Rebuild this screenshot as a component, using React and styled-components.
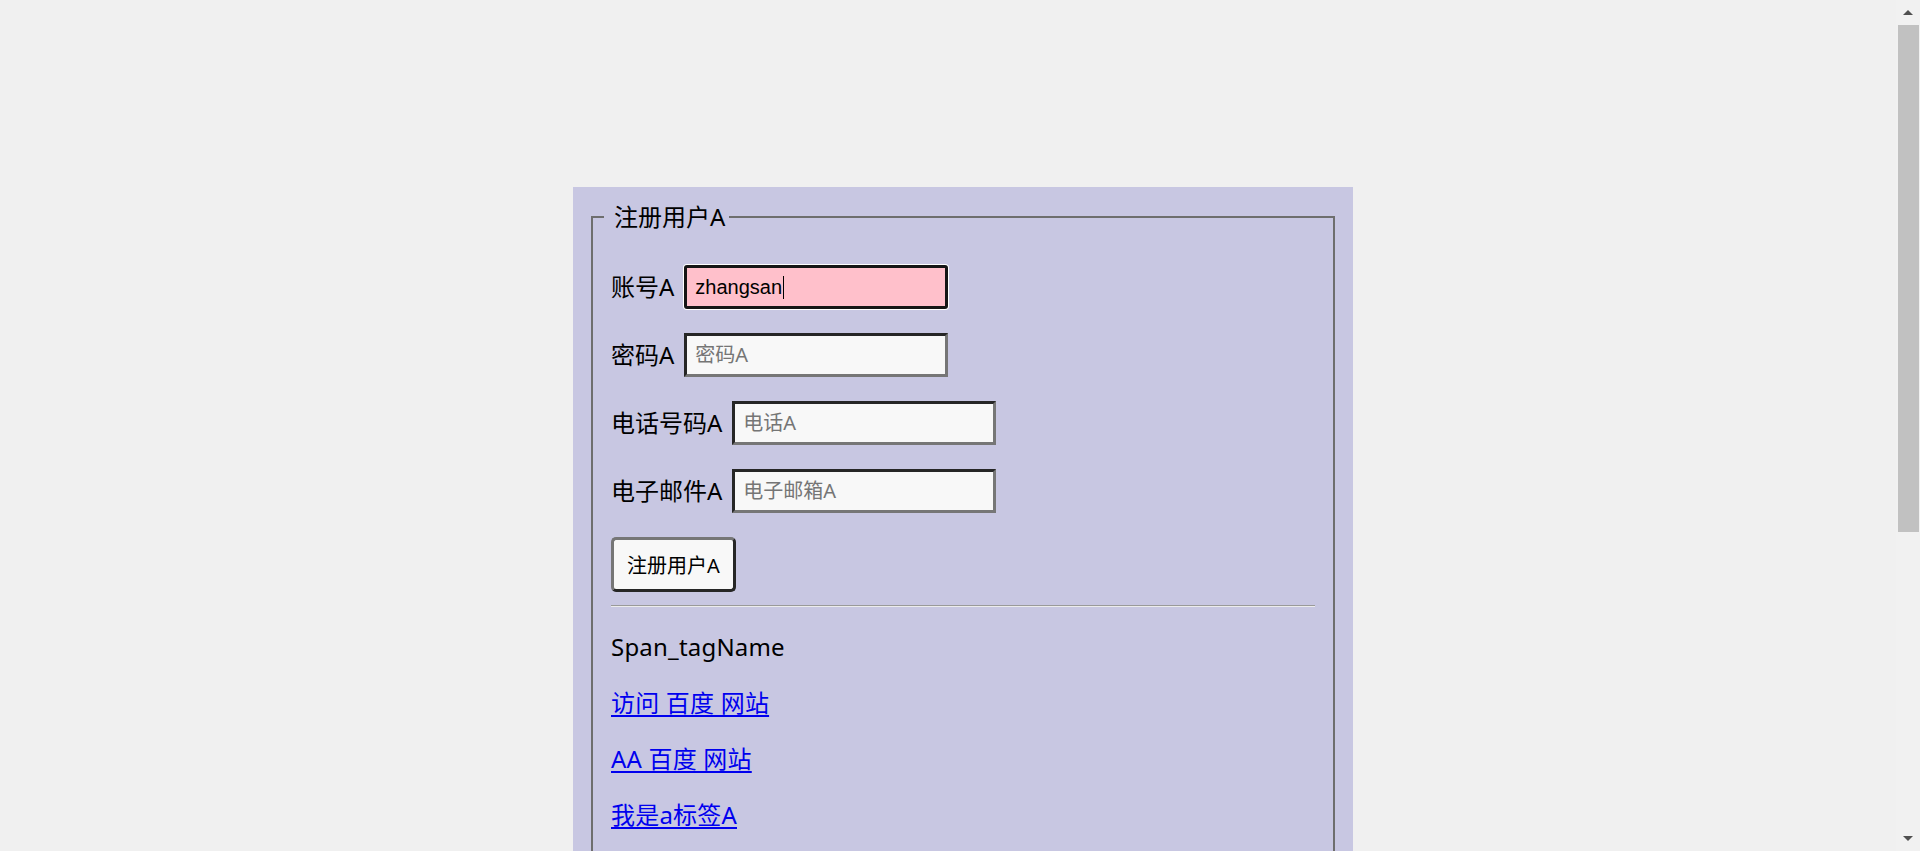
import React from "react";
import styled, { createGlobalStyle } from "styled-components";

const GlobalStyle = createGlobalStyle`
  html, body {
    margin: 0;
    padding: 0;
    background: #f0f0f0;
  }
  body {
    font-family: "Noto Sans", "Noto Sans CJK SC", sans-serif;
    color: #000;
  }
`;

const Page = styled.div`
  padding: 187px 0 20px 573px;
`;

const Panel = styled.div`
  box-sizing: border-box;
  width: 780px;
  min-height: 1165px;
  background: #c8c7e2;
  padding: 14px 16px 16px;
  display: flex;
  flex-direction: column;
`;

const FieldSet = styled.fieldset`
  flex: 1;
  margin: 0 2px;
  border: 2px solid #6e6e6e;
  padding: 32px 18px 20px;
  min-width: 0;
`;

const Legend = styled.legend`
  font-size: 24px;
  line-height: 32px;
  margin-left: -7px;
  padding: 0 4px 0 10px;
`;

const Form = styled.div`
  display: flex;
  flex-direction: column;
  gap: 24px;
`;

const Row = styled.div`
  display: flex;
  align-items: center;
  gap: 10px;
  height: 44px;
`;

const Label = styled.label`
  font-size: 24px;
  line-height: 32px;
  white-space: nowrap;
`;

const Input = styled.input`
  box-sizing: border-box;
  width: 264px;
  height: 44px;
  padding: 0 8px;
  margin: 0;
  font-family: "Liberation Sans", "Noto Sans CJK SC", sans-serif;
  font-size: 20px;
  color: #000;
  background: ${(p) => (p.$active ? "#ffc0cb" : "#f8f8f8")};
  border: 3px solid;
  border-color: ${(p) =>
    p.$active ? "#151515" : "#262626 #767676 #767676 #262626"};
  border-radius: ${(p) => (p.$active ? "3px" : "0")};
  box-shadow: ${(p) => (p.$active ? "0 0 0 1px #ffffff" : "none")};
  outline: none;
  &::placeholder {
    color: #757575;
    font-family: "Noto Sans", "Noto Sans CJK SC", sans-serif;
  }
`;

const InputWrap = styled.span`
  position: relative;
  display: inline-flex;
`;

const Caret = styled.span`
  position: absolute;
  top: 11px;
  left: ${(p) => p.$left}px;
  width: 1px;
  height: 23px;
  background: #000;
`;

const Button = styled.button`
  align-self: flex-start;
  box-sizing: border-box;
  height: 55px;
  padding: 0 13px;
  margin: 0;
  font-family: "Noto Sans", "Noto Sans CJK SC", sans-serif;
  font-size: 20px;
  color: #000;
  background: #f8f8f8;
  border: 3px solid;
  border-color: #767676 #262626 #262626 #767676;
  border-radius: 5px;
`;

const Rule = styled.hr`
  margin: -11px 0 0;
  border: 0;
  border-top: 1px solid #9a9a9a;
  border-bottom: 1px solid #ececec;
  height: 0;
`;

const Text = styled.p`
  margin: 0;
  font-size: 24px;
  line-height: 32px;
  letter-spacing: 0.2px;
`;

const Link = styled.a`
  color: #0000ee;
  text-decoration: underline;
  text-underline-offset: 3px;
`;

/* drawing of the browser's scrollbar, which lies over the page's right edge */
const ScrollTrack = styled.div`
  position: fixed;
  top: 0;
  right: 0;
  width: 24px;
  height: 100vh;
  background: #f1f1f1;
`;

const ScrollThumb = styled.div`
  position: absolute;
  top: 25px;
  left: 2px;
  width: 21px;
  height: 507px;
  background: #c1c1c1;
`;

const Arrow = styled.div`
  position: absolute;
  left: 7px;
  width: 0;
  height: 0;
  border-left: 5px solid transparent;
  border-right: 5px solid transparent;
  ${(p) =>
    p.$down
      ? "bottom: 10px; border-top: 5px solid #505050;"
      : "top: 10px; border-bottom: 5px solid #505050;"}
`;

const fields = [
  { label: "账号A", placeholder: "账号A", value: "zhangsan", active: true },
  { label: "密码A", placeholder: "密码A" },
  { label: "电话号码A", placeholder: "电话A" },
  { label: "电子邮件A", placeholder: "电子邮箱A" },
];

const links = ["访问 百度 网站", "AA 百度 网站", "我是a标签A"];

export default function App() {
  return (
    <>
      <GlobalStyle />
      <Page>
        <Panel>
          <FieldSet>
            <Legend>注册用户A</Legend>
            <Form>
              {fields.map((f) => (
                <Row key={f.label}>
                  <Label>{f.label}</Label>
                  <InputWrap>
                    <Input
                      $active={f.active}
                      placeholder={f.placeholder}
                      defaultValue={f.value}
                      readOnly={f.active}
                    />
                    {f.active && <Caret $left={99} />}
                  </InputWrap>
                </Row>
              ))}
              <Button type="button">注册用户A</Button>
              <Rule />
              <Text>Span_tagName</Text>
              {links.map((l) => (
                <Text key={l}>
                  <Link href="#">{l}</Link>
                </Text>
              ))}
            </Form>
          </FieldSet>
        </Panel>
      </Page>
      <ScrollTrack>
        <Arrow />
        <ScrollThumb />
        <Arrow $down />
      </ScrollTrack>
    </>
  );
}
